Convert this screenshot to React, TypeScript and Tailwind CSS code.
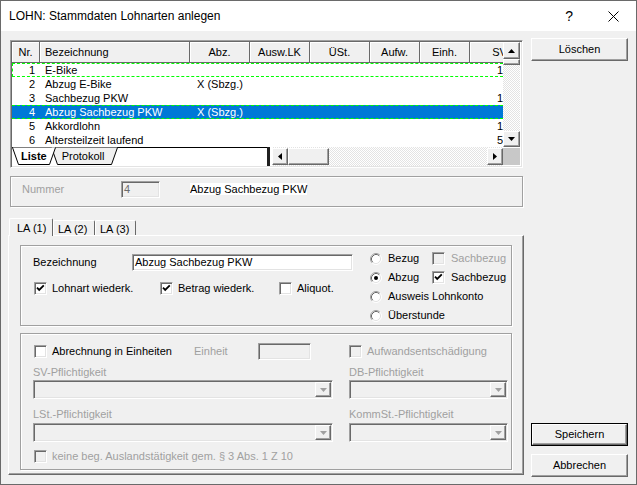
import React from "react";

const sunken =
  "border border-t-[#a0a0a0] border-l-[#a0a0a0] border-b-white border-r-white shadow-[inset_1px_1px_0_#696969,inset_-1px_-1px_0_#e3e3e3]";
const raised =
  "border border-t-white border-l-white border-b-[#696969] border-r-[#696969] shadow-[inset_-1px_-1px_0_#a0a0a0]";
const etched =
  "border border-[#a0a0a0] shadow-[inset_1px_1px_0_#ffffff,1px_1px_0_#ffffff]";
const dis = "text-[#a0a0a0]";

function Check({ checked, disabled }: { checked?: boolean; disabled?: boolean }) {
  return (
    <span
      className={`relative inline-block shrink-0 w-[13px] h-[13px] ${sunken} ${
        disabled ? "bg-[#f0f0f0]" : "bg-white"
      }`}
    >
      {checked && (
        <svg className="absolute left-0 top-0" width="11" height="11" viewBox="0 0 11 11">
          <path d="M2 4.6 L4.2 6.9 L8.8 2.3" stroke="#000" strokeWidth="1.8" fill="none" />
        </svg>
      )}
    </span>
  );
}

function Radio({ checked }: { checked?: boolean }) {
  return (
    <svg width="12" height="12" viewBox="0 0 12 12" className="shrink-0">
      <circle cx="6" cy="6" r="5" fill="#ffffff" />
      <path d="M2.11 9.89 A5.5 5.5 0 0 1 9.89 2.11" stroke="#a0a0a0" fill="none" />
      <path d="M9.89 2.11 A5.5 5.5 0 0 1 2.11 9.89" stroke="#ffffff" fill="none" />
      <path d="M2.82 9.18 A4.5 4.5 0 0 1 9.18 2.82" stroke="#696969" fill="none" />
      <path d="M9.18 2.82 A4.5 4.5 0 0 1 2.82 9.18" stroke="#e3e3e3" fill="none" />
      {checked && <circle cx="6" cy="6" r="2" fill="#000" />}
    </svg>
  );
}

function Arrow({ dir, color = "#000" }: { dir: "up" | "down" | "left" | "right"; color?: string }) {
  const d =
    dir === "up"
      ? "M0 4H7L3.5 0Z"
      : dir === "down"
      ? "M0 0H7L3.5 4Z"
      : dir === "left"
      ? "M4 0V7L0 3.5Z"
      : "M0 0V7L4 3.5Z";
  const vertical = dir === "up" || dir === "down";
  return (
    <svg width={vertical ? 7 : 4} height={vertical ? 4 : 7} viewBox={vertical ? "0 0 7 4" : "0 0 4 7"}>
      <path d={d} fill={color} />
    </svg>
  );
}

function Combo({ w }: { w: string }) {
  return (
    <div className={`${w} h-[19px] ${sunken} bg-[#f0f0f0] flex justify-end p-[1px]`}>
      <div className={`w-[16px] ${raised} bg-[#f0f0f0] flex items-center justify-center`}>
        <Arrow dir="down" color="#a0a0a0" />
      </div>
    </div>
  );
}

function Btn({ label, def }: { label: string; def?: boolean }) {
  return (
    <div className={`h-[23px] w-[97px] ${def ? "border border-black" : ""}`}>
      <div
        className={`w-full h-full ${raised} bg-[#f0f0f0] flex items-center justify-center text-[11px] text-black`}
      >
        {label}
      </div>
    </div>
  );
}

const rows = [
  { nr: "1", bez: "E-Bike", abz: "", sv: "1" },
  { nr: "2", bez: "Abzug E-Bike", abz: "X (Sbzg.)", sv: "" },
  { nr: "3", bez: "Sachbezug PKW", abz: "", sv: "1" },
  { nr: "4", bez: "Abzug Sachbezug PKW", abz: "X (Sbzg.)", sv: "" },
  { nr: "5", bez: "Akkordlohn", abz: "", sv: "1" },
  { nr: "6", bez: "Altersteilzeit laufend", abz: "", sv: "5" },
];

const headCls = `shrink-0 h-full border-r border-b border-[#696969] shadow-[inset_1px_1px_0_#ffffff] flex items-center`;

function Grid() {
  return (
    <div className={`ml-[2px] w-[513px] h-[128px] ${sunken} p-[1px] bg-white flex flex-col`}>
      <div className="flex h-[105px]">
        <div className="w-[491px] overflow-hidden flex flex-col">
          <div className="h-[21px] flex bg-[#f0f0f0] shrink-0">
            <div className={`${headCls} w-[28px] justify-center`}>Nr.</div>
            <div className={`${headCls} w-[150px] pl-[5px]`}>Bezeichnung</div>
            <div className={`${headCls} w-[60px] justify-center`}>Abz.</div>
            <div className={`${headCls} w-[60px] justify-center`}>Ausw.LK</div>
            <div className={`${headCls} w-[60px] justify-center`}>ÜSt.</div>
            <div className={`${headCls} w-[50px] justify-center`}>Aufw.</div>
            <div className={`${headCls} w-[50px] justify-center`}>Einh.</div>
            <div className={`${headCls} w-[60px] justify-center`}>SV</div>
          </div>
          {rows.map((r, i) => {
            const sel = i === 3;
            const focus = i === 0;
            return (
              <div
                key={r.nr}
                className={`h-[14px] flex items-center shrink-0 leading-[14px] ${
                  sel ? "bg-[#0078d7] text-white border-y border-dashed border-[#00ff00]" : ""
                } ${focus ? "border-y border-dashed border-[#00ff00]" : ""}`}
              >
                <div className={`w-[28px] shrink-0 text-right pr-[5px] ${focus ? "border-l border-dashed border-[#00ff00]" : ""}`}>
                  {r.nr}
                </div>
                <div className="w-[150px] shrink-0 pl-[5px] whitespace-nowrap">{r.bez}</div>
                <div className="w-[60px] shrink-0 text-center whitespace-nowrap">{r.abz}</div>
                <div className="w-[60px] shrink-0" />
                <div className="w-[60px] shrink-0" />
                <div className="w-[50px] shrink-0" />
                <div className="w-[50px] shrink-0" />
                <div className="w-[60px] shrink-0 text-center">{r.sv}</div>
              </div>
            );
          })}
        </div>
        <div className="w-[17px] flex flex-col bg-[repeating-conic-gradient(#e3e3e3_0_25%,#ffffff_0_50%)] bg-[length:2px_2px]">
          <div className={`h-[17px] ${raised} bg-[#f0f0f0] flex items-center justify-center`}>
            <Arrow dir="up" />
          </div>
          <div className={`h-[6px] ${raised} bg-[#f0f0f0]`} />
          <div className="flex-1" />
          <div className={`h-[16px] ${raised} bg-[#f0f0f0] flex items-center justify-center`}>
            <Arrow dir="down" />
          </div>
        </div>
      </div>
      <div className="h-[19px] flex bg-[#f0f0f0]">
        <div className="relative w-[255px] h-full bg-white">
          <svg className="absolute inset-0" width="255" height="19" viewBox="0 0 255 19">
            <line x1="0" y1="0.5" x2="255" y2="0.5" stroke="#000" />
            <path d="M39.5 0.5 L45.5 17.5 L99.5 17.5 L105.5 0.5" fill="#f0f0f0" stroke="#000" />
            <path d="M0.5 0.5 L6.5 17.5 L37.5 17.5 L43.5 0.5" fill="#ffffff" stroke="#000" />
          </svg>
          <div className="relative flex items-center h-[18px]">
            <span className="ml-[9px] font-bold">Liste</span>
            <span className="ml-[15px]">Protokoll</span>
          </div>
        </div>
        <div className="w-[5px] h-full flex">
          <div className="w-[3px] h-full bg-[#202020]" />
          <div className="w-[2px] h-full bg-white" />
        </div>
        <div className="w-[231px] h-full flex pt-[1px] pb-[1px] bg-[repeating-conic-gradient(#e3e3e3_0_25%,#ffffff_0_50%)] bg-[length:2px_2px]">
          <div className={`w-[16px] ${raised} bg-[#f0f0f0] flex items-center justify-center`}>
            <Arrow dir="left" />
          </div>
          <div className={`w-[41px] ${raised} bg-[#f0f0f0]`} />
          <div className="flex-1" />
          <div className={`w-[16px] ${raised} bg-[#f0f0f0] flex items-center justify-center`}>
            <Arrow dir="right" />
          </div>
        </div>
        <div className="w-[18px] h-full pt-[1px] pb-[1px] bg-white">
          <div className="w-[17px] h-full bg-[#c8c8c8]" />
        </div>
      </div>
    </div>
  );
}

export default function App() {
  return (
    <div className="w-[637px] h-[485px] border border-[#6a6a6a] bg-[#f0f0f0] flex flex-col font-['Liberation_Sans',Arial,sans-serif] text-[11px] leading-[13px] text-black overflow-hidden">
      <div className="h-[30px] bg-white flex items-center shrink-0">
        <span className="ml-[8px] text-[12px] leading-[16px]">LOHN: Stammdaten Lohnarten anlegen</span>
        <span className="ml-auto text-[14px] leading-[16px] mr-[35px]">?</span>
        <svg className="mr-[17px]" width="11" height="11" viewBox="0 0 11 11">
          <path d="M0.5 0.5 L10.5 10.5 M10.5 0.5 L0.5 10.5" stroke="#000" strokeWidth="1" />
        </svg>
      </div>
      <div className="flex flex-1">
        <div className="flex flex-col pl-[7px] pt-[9px] w-[524px] shrink-0">
          <Grid />
          <div className={`mt-[8px] ml-[2px] w-[513px] h-[31px] ${etched} pl-[11px] pt-[4px]`}>
            <div className="flex items-center h-[17px]">
              <span className={`w-[99px] ${dis}`}>Nummer</span>
              <div className={`w-[39px] h-[17px] ${sunken} bg-[#f0f0f0] pl-[2px] flex items-center text-[#6d6d6d]`}>4</div>
              <span className="ml-[30px] bg-white leading-[12px] -mt-[2px]">Abzug Sachbezug PKW</span>
            </div>
          </div>
          <div className="mt-[9px] h-[19px] flex items-end relative z-10">
            <div className="ml-[1px] w-[44px] h-[18px] -mb-[1px] bg-[#f0f0f0] border-l border-t border-white border-r border-r-[#696969] rounded-t-[2px] pl-[7px] pt-[3px]">
              LA (1)
            </div>
            <div className="w-[42px] h-[15px] bg-[#f0f0f0] border-t border-l border-white border-r border-r-[#696969] rounded-t-[2px] pl-[4px] pt-[2px]">
              LA (2)
            </div>
            <div className="w-[41px] h-[15px] bg-[#f0f0f0] border-t border-l border-white border-r border-r-[#696969] rounded-t-[2px] pl-[4px] pt-[2px]">
              LA (3)
            </div>
          </div>
          <div className="w-[516px] h-[240px] border border-white border-r-[#696969] border-b-[#696969] shadow-[inset_-1px_-1px_0_#a0a0a0] pl-[11px] pt-[9px]">
            <div className={`w-[492px] h-[81px] ${etched} flex`}>
              <div className="pl-[12px] pt-[8px] w-[349px]">
                <div className="flex items-center h-[17px]">
                  <span className="w-[99px]">Bezeichnung</span>
                  <div className={`w-[221px] h-[17px] ${sunken} bg-white pl-[2px] flex items-center`}>
                    Abzug Sachbezug PKW
                  </div>
                </div>
                <div className="flex items-center mt-[11px] h-[13px] pl-[1px]">
                  <div className="w-[126px] flex items-center">
                    <Check checked />
                    <span className="ml-[5px]">Lohnart wiederk.</span>
                  </div>
                  <div className="w-[119px] flex items-center">
                    <Check checked />
                    <span className="ml-[5px]">Betrag wiederk.</span>
                  </div>
                  <div className="flex items-center">
                    <Check />
                    <span className="ml-[5px]">Aliquot.</span>
                  </div>
                </div>
              </div>
              <div className="pt-[3px] flex flex-col">
                <div className="h-[19px] flex items-center">
                  <div className="w-[62px] flex items-center">
                    <Radio />
                    <span className="ml-[6px]">Bezug</span>
                  </div>
                  <Check disabled />
                  <span className={`ml-[6px] ${dis}`}>Sachbezug</span>
                </div>
                <div className="h-[19px] flex items-center">
                  <div className="w-[62px] flex items-center">
                    <Radio checked />
                    <span className="ml-[6px]">Abzug</span>
                  </div>
                  <Check checked />
                  <span className="ml-[6px]">Sachbezug</span>
                </div>
                <div className="h-[19px] flex items-center">
                  <Radio />
                  <span className="ml-[6px]">Ausweis Lohnkonto</span>
                </div>
                <div className="h-[19px] flex items-center">
                  <Radio />
                  <span className="ml-[6px]">Überstunde</span>
                </div>
              </div>
            </div>
            <div className={`mt-[7px] w-[492px] h-[137px] ${etched} pl-[12px] pt-[9px] flex flex-col`}>
              <div className="flex items-center h-[17px]">
                <div className="w-[316px] flex items-center">
                  <div className="w-[161px] flex items-center pl-[1px]">
                    <Check />
                    <span className="ml-[5px]">Abrechnung in Einheiten</span>
                  </div>
                  <span className={`w-[64px] ${dis}`}>Einheit</span>
                  <div className={`w-[53px] h-[17px] ${sunken} bg-[#f0f0f0]`} />
                </div>
                <Check disabled />
                <span className={`ml-[5px] ${dis}`}>Aufwandsentschädigung</span>
              </div>
              <div className={`flex mt-[6px] h-[13px] ${dis}`}>
                <span className="w-[316px]">SV-Pflichtigkeit</span>
                <span>DB-Pflichtigkeit</span>
              </div>
              <div className="flex mt-[1px]">
                <Combo w="w-[300px]" />
                <div className="w-[16px]" />
                <Combo w="w-[159px]" />
              </div>
              <div className={`flex mt-[9px] h-[13px] ${dis}`}>
                <span className="w-[316px]">LSt.-Pflichtigkeit</span>
                <span>KommSt.-Pflichtigkeit</span>
              </div>
              <div className="flex mt-[2px]">
                <Combo w="w-[300px]" />
                <div className="w-[16px]" />
                <Combo w="w-[159px]" />
              </div>
              <div className="flex items-center mt-[8px] h-[13px] pl-[1px]">
                <Check disabled />
                <span className={`ml-[5px] ${dis}`}>keine beg. Auslandstätigkeit gem. § 3 Abs. 1 Z 10</span>
              </div>
            </div>
          </div>
        </div>
        <div className="flex flex-col ml-[6px] pt-[7px] pb-[7px] w-[97px]">
          <Btn label="Löschen" />
          <div className="flex-1" />
          <Btn label="Speichern" def />
          <div className="h-[8px]" />
          <Btn label="Abbrechen" />
        </div>
      </div>
    </div>
  );
}
